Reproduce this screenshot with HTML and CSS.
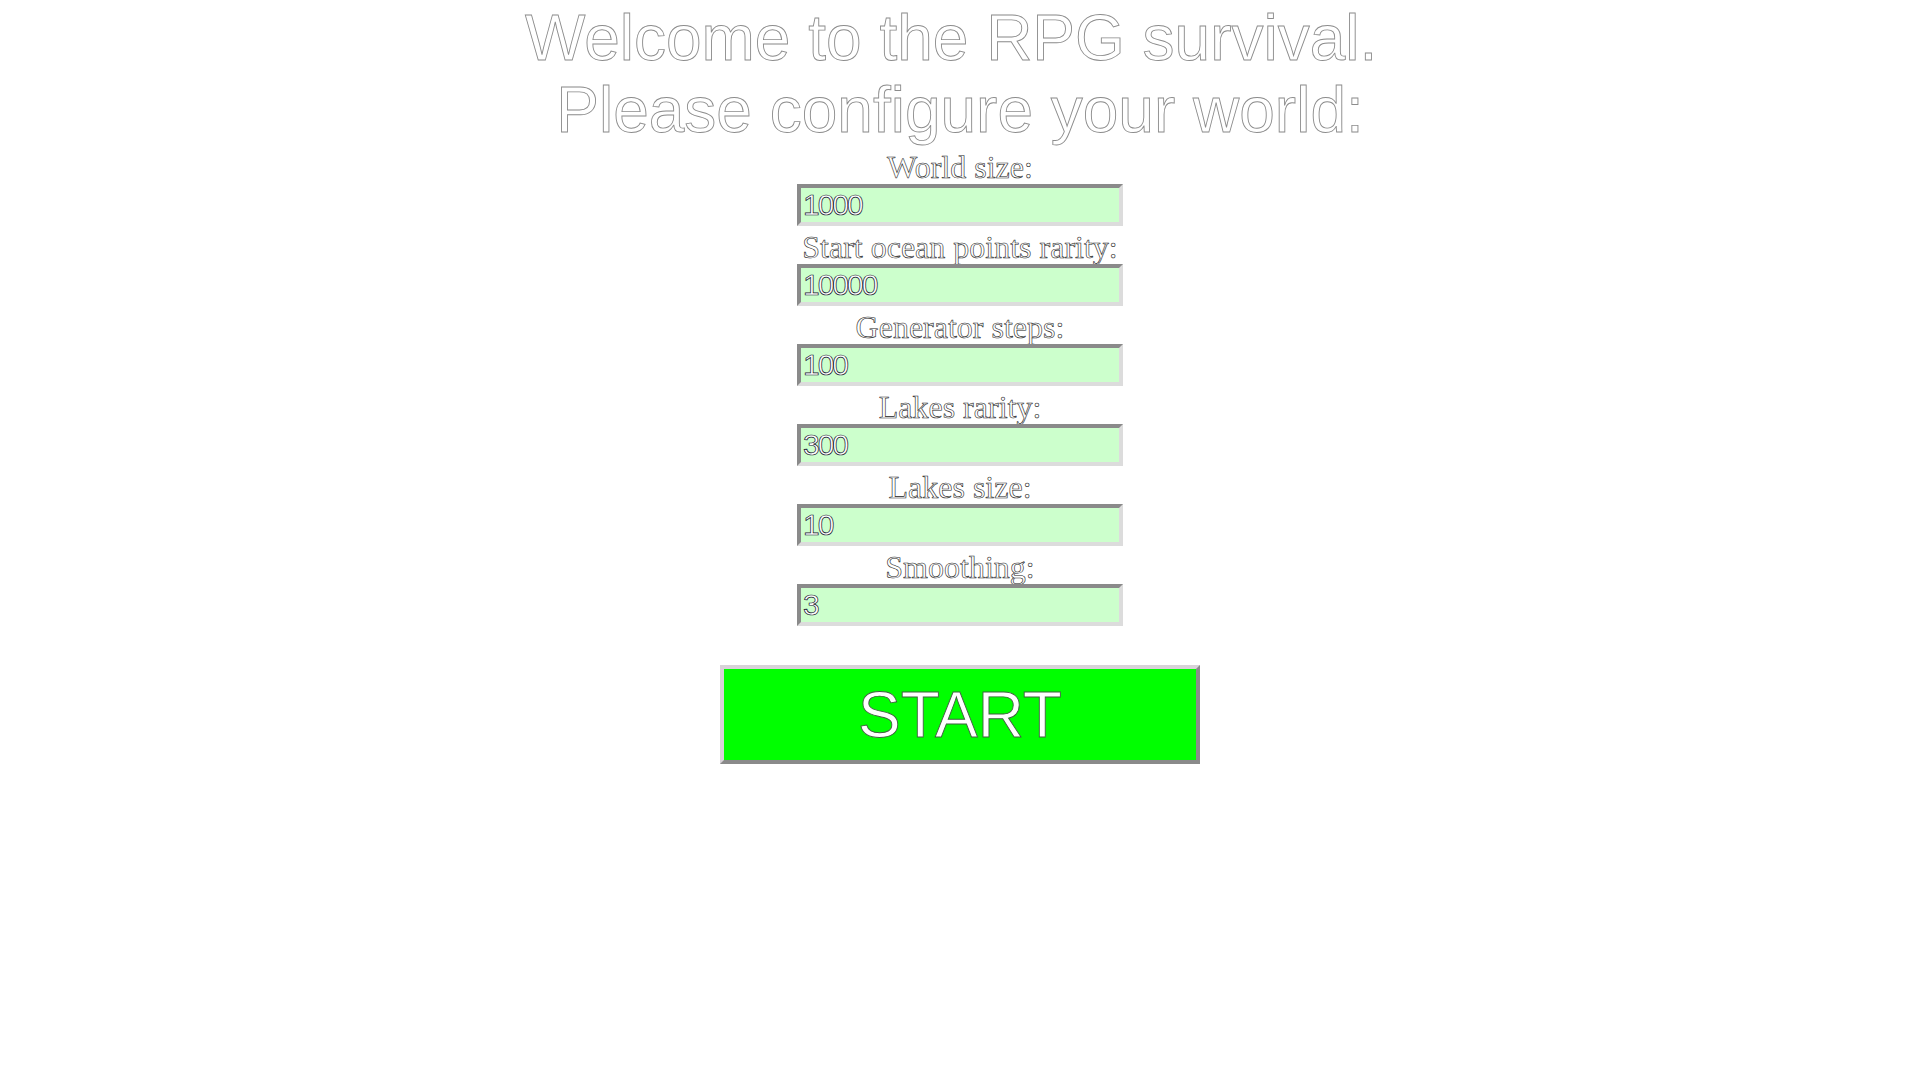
FILE: index.html
```html
<!DOCTYPE html>
<html>
<head>
<meta charset="utf-8">
<link rel="stylesheet" href="styles.css">
</head>
<body>
<h1 class="title">Welcome to the RPG survival.&nbsp;<br>Please configure your world:</h1>
<form class="config">
  <label class="field-label">World size:</label>
  <input class="field-input" type="text" value="1000">
  <label class="field-label">Start ocean points rarity:</label>
  <input class="field-input" type="text" value="10000">
  <label class="field-label">Generator steps:</label>
  <input class="field-input" type="text" value="100">
  <label class="field-label">Lakes rarity:</label>
  <input class="field-input" type="text" value="300">
  <label class="field-label">Lakes size:</label>
  <input class="field-input" type="text" value="10">
  <label class="field-label">Smoothing:</label>
  <input class="field-input" type="text" value="3">
  <button class="start-btn" type="button">START</button>
</form>
</body>
</html>
```

FILE: styles.css
```css
html, body {
  margin: 0;
  padding: 0;
  background: #ffffff;
}
body {
  font-family: "Liberation Serif", "Times New Roman", serif;
  text-align: center;
}
.title {
  margin: 0;
  padding-top: 2px;
  font-family: "Liberation Sans", Arial, sans-serif;
  font-size: 64px;
  font-weight: normal;
  line-height: 72px;
  color: #ffffff;
  -webkit-text-stroke: 0.9px #8c8c8c;
}
.config {
  display: flex;
  flex-direction: column;
  align-items: center;
  margin: 0;
}
.field-label {
  display: block;
  box-sizing: border-box;
  height: 38px;
  padding-top: 4px;
  font-size: 32px;
  line-height: 34px;
  color: #ffffff;
  -webkit-text-stroke: 0.6px #222222;
}
.field-input {
  display: block;
  box-sizing: border-box;
  width: 326px;
  height: 42px;
  margin: 0;
  padding: 0 2px;
  border-style: solid;
  border-width: 4px;
  border-color: #8a8a8a #dcdcdc #dcdcdc #8a8a8a;
  background: #ccffcc;
  font-family: "Liberation Sans", Arial, sans-serif;
  font-size: 30px;
  letter-spacing: -2px;
  color: #ffffff;
  -webkit-text-stroke: 0.7px #10102a;
  outline: none;
}
.start-btn {
  display: block;
  box-sizing: border-box;
  width: 480px;
  height: 99px;
  margin: 39px 0 0 0;
  padding: 0;
  border-style: solid;
  border-width: 4px;
  border-color: #d8d2d8 #8a8a8a #8a8a8a #d8d2d8;
  background: #00ff00;
  font-family: "Liberation Sans", Arial, sans-serif;
  font-size: 64px;
  line-height: 74px;
  color: #ffffff;
  -webkit-text-stroke: 0.9px #3f5f3f;
  cursor: pointer;
}
```
